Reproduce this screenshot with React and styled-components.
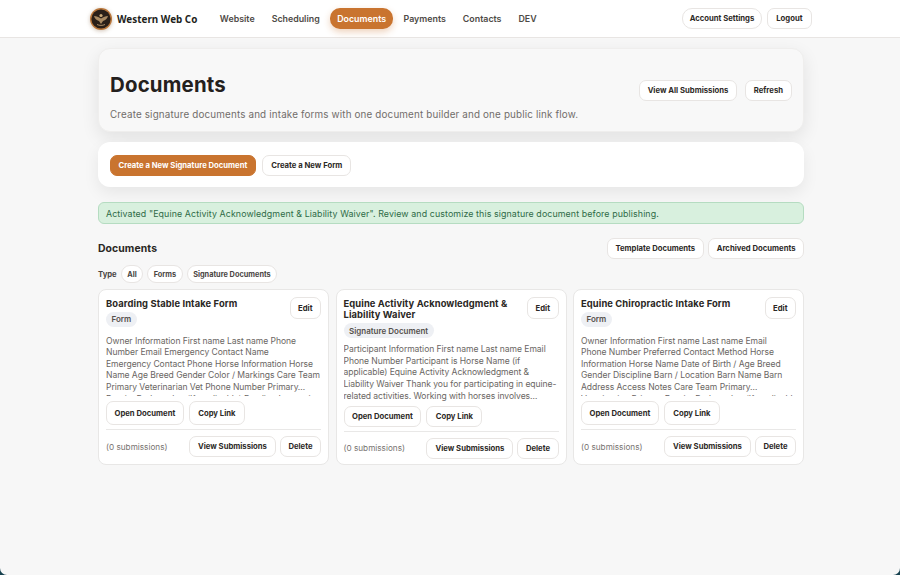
import styled, { createGlobalStyle } from "styled-components";

const GlobalStyle = createGlobalStyle`
  html { background: #17424f; }
  body {
    margin: 0;
    background: #17424f;
    font-family: Inter, "Liberation Sans", sans-serif;
    color: #211e1b;
    -webkit-font-smoothing: antialiased;
  }
  * { box-sizing: border-box; }
`;

const Page = styled.div`
  width: 900px;
  height: 575px;
  overflow: hidden;
  background: #f7f7f7;
  border-radius: 0 0 7px 7px;
`;

const Nav = styled.header`
  height: 38px;
  background: #fff;
  border-bottom: 1px solid #e8e5e3;
  padding: 0 88px 0 90px;
  display: flex;
  align-items: center;
`;

const Brand = styled.div`
  display: flex;
  align-items: center;
  gap: 5px;
  font-family: "Noto Sans", sans-serif;
  font-size: 9.9px;
  font-weight: 700;
  color: #231f1c;
  margin-right: 16px;
`;

const LogoMark = styled.svg`
  width: 22px;
  height: 22px;
  display: block;
  filter: drop-shadow(0 1px 2px rgba(120, 80, 40, 0.35));
`;

const NavLinks = styled.nav`
  display: flex;
  align-items: center;
  gap: 4px;
`;

const NavLink = styled.span`
  padding: 0 ${(p) => (p.$active ? "7px" : "6.5px")};
  height: 21px;
  display: flex;
  align-items: center;
  border-radius: 10px;
  font-size: 8.85px;
  font-weight: 600;
  color: ${(p) => (p.$active ? "#fff" : "#4e4a46")};
  background: ${(p) => (p.$active ? "#c9742f" : "transparent")};
  box-shadow: ${(p) => (p.$active ? "0 3px 7px rgba(201, 116, 47, 0.32)" : "none")};
`;

const NavActions = styled.div`
  margin-left: auto;
  display: flex;
  align-items: center;
  gap: 5px;
`;

const Button = styled.button`
  font-family: inherit;
  font-size: 7.7px;
  font-weight: 700;
  color: #2c2926;
  background: #fff;
  border: 1px solid #e8e5e3;
  border-radius: ${(p) => p.$radius || "7px"};
  height: ${(p) => p.$h || "21px"};
  padding: 0 ${(p) => p.$px || "7.5px"};
  white-space: nowrap;
  display: inline-flex;
  align-items: center;
  justify-content: center;
  flex: none;
`;

const PrimaryButton = styled(Button)`
  background: #c9742f;
  border-color: #c9742f;
  color: #fff;
`;

const Main = styled.main`
  width: 706px;
  margin: 10px 0 0 98px;
`;

const Hero = styled.section`
  height: 84px;
  background: #f8f8f8;
  border: 1px solid #efeeed;
  border-radius: 12px;
  box-shadow: 0 6px 18px rgba(0, 0, 0, 0.09);
  padding: 0 11px;
  display: flex;
  justify-content: space-between;
  align-items: flex-start;
`;

const HeroText = styled.div`
  padding-top: 23px;
`;

const Title = styled.h1`
  margin: 0;
  font-size: 20.4px;
  line-height: 26px;
  font-weight: 700;
  letter-spacing: 0.2px;
  color: #24201d;
`;

const Subtitle = styled.p`
  margin: 10px 0 0;
  font-size: 9.85px;
  line-height: 13px;
  letter-spacing: 0.15px;
  color: #716d6a;
`;

const HeroActions = styled.div`
  display: flex;
  gap: 8px;
  padding-top: 31px;
`;

const ActionCard = styled.section`
  height: 45px;
  margin-top: 10px;
  background: #fff;
  border-radius: 12px;
  box-shadow: 0 6px 16px rgba(0, 0, 0, 0.07);
  padding: 1px 12px 0;
  display: flex;
  align-items: center;
  gap: 6.5px;
`;

const Alert = styled.div`
  height: 22px;
  margin-top: 15px;
  background: #d8f0de;
  border: 1px solid #b5dcc1;
  border-radius: 6px;
  padding: 0 7px;
  display: flex;
  align-items: center;
  font-size: 8.85px;
  letter-spacing: 0.1px;
  color: #2f6b47;
`;

const SectionHead = styled.div`
  margin-top: 14px;
  height: 21px;
  display: flex;
  align-items: center;
  justify-content: space-between;
`;

const SectionTitle = styled.h2`
  margin: 0;
  font-size: 10.4px;
  font-weight: 700;
  letter-spacing: 0.1px;
  color: #2a2724;
`;

const ButtonGroup = styled.div`
  display: flex;
  gap: 4px;
`;

const FilterRow = styled.div`
  margin-top: 6px;
  display: flex;
  align-items: center;
  gap: 4px;
  font-size: 7.7px;
  font-weight: 700;
  color: #4a4643;
`;

const Chip = styled.span`
  height: 18px;
  padding: 0 5.5px;
  background: #fff;
  border: 1px solid #e8e5e3;
  border-radius: 9px;
  font-size: 7.35px;
  display: flex;
  align-items: center;
`;

const CardGrid = styled.div`
  margin-top: 6px;
  display: grid;
  grid-template-columns: 231px 231px 231px;
  column-gap: 6.5px;
`;

const Card = styled.article`
  height: 176px;
  background: #fff;
  border: 1px solid #e8e7e6;
  border-radius: 8px;
  padding: 7px;
  display: flex;
  flex-direction: column;
`;

const CardHead = styled.div`
  display: flex;
  justify-content: space-between;
  align-items: flex-start;
  gap: 8px;
`;

const CardTitle = styled.h3`
  margin: 0;
  padding-top: 0.5px;
  font-size: 9.4px;
  line-height: 11.5px;
  font-weight: 700;
  letter-spacing: 0.1px;
  color: #2a2724;
`;

const Badge = styled.span`
  display: flex;
  width: fit-content;
  align-items: center;
  height: 15px;
  margin-top: 2.5px;
  padding: 0 5.5px;
  background: #eef0f4;
  border-radius: 8px;
  font-size: 8px;
  font-weight: 600;
  color: #55504c;
`;

const Preview = styled.div`
  flex: none;
  margin-top: ${(p) => (p.$tall ? "6px" : "9px")};
  height: ${(p) => (p.$tall ? "58.5px" : "60px")};
  overflow: hidden;
  font-size: 8.55px;
  line-height: 11.65px;
  letter-spacing: -0.05px;
  color: #6a6663;
`;

const PreviewLine = styled.span`
  display: block;
  white-space: nowrap;
`;

const CardButtons = styled.div`
  margin-top: ${(p) => (p.$tall ? "3px" : "5.5px")};
  display: flex;
  gap: 5px;
`;

const CardFoot = styled.div`
  margin-top: 4px;
  border-top: 1px solid #e9e8e7;
  padding-top: 6px;
  display: flex;
  align-items: center;
  gap: 4px;
`;

const Count = styled.span`
  margin-right: auto;
  font-size: 8.2px;
  color: #77726f;
`;

const Logo = () => (
  <LogoMark viewBox="0 0 22 22">
    <circle cx="11" cy="11" r="11" fill="#b9763a" />
    <circle cx="11" cy="11" r="9.6" fill="#2a1f18" />
    <path d="M4 8c2.5.2 4.5 1 7 2.6C13.500 9 15.500 8.200 18 8c-.6 2.600-2.600 4.400-5 5l-2 3-2-3c-2.400-.6-4.400-2.400-5-5z" fill="#a98a63" />
    <circle cx="11" cy="7.500" r="1.600" fill="#c9a877" />
    <path d="M7 16.500c2.500 1.200 5.500 1.200 8 0" stroke="#a98a63" strokeWidth="1" fill="none" />
  </LogoMark>
);

const cards = [
  {
    title: "Boarding Stable Intake Form",
    type: "Form",
    lines: [
      "Owner Information First name Last name Phone",
      "Number Email Emergency Contact Name",
      "Emergency Contact Phone Horse Information Horse",
      "Name Age Breed Gender Color / Markings Care Team",
      "Primary Veterinarian Vet Phone Number Primary…",
      "Dentist Bodyworker (If applicable) Feeding Instructions",
    ],
  },
  {
    title: "Equine Activity Acknowledgment & Liability Waiver",
    type: "Signature Document",
    tall: true,
    lines: [
      "Participant Information First name Last name Email",
      "Phone Number Participant is Horse Name (if",
      "applicable) Equine Activity Acknowledgment &",
      "Liability Waiver Thank you for participating in equine-",
      "related activities. Working with horses involves…",
    ],
  },
  {
    title: "Equine Chiropractic Intake Form",
    type: "Form",
    lines: [
      "Owner Information First name Last name Email",
      "Phone Number Preferred Contact Method Horse",
      "Information Horse Name Date of Birth / Age Breed",
      "Gender Discipline Barn / Location Barn Name Barn",
      "Address Access Notes Care Team Primary…",
      "Veterinarian Primary Dentist Bodyworker (If applicable)",
    ],
  },
];

export default function App() {
  return (
    <>
      <GlobalStyle />
      <Page>
        <Nav>
          <Brand>
            <Logo />
            Western Web Co
          </Brand>
          <NavLinks>
            <NavLink>Website</NavLink>
            <NavLink>Scheduling</NavLink>
            <NavLink $active>Documents</NavLink>
            <NavLink>Payments</NavLink>
            <NavLink>Contacts</NavLink>
            <NavLink>DEV</NavLink>
          </NavLinks>
          <NavActions>
            <Button $radius="10px" $px="6.5px">Account Settings</Button>
            <Button $px="8.5px">Logout</Button>
          </NavActions>
        </Nav>
        <Main>
          <Hero>
            <HeroText>
              <Title>Documents</Title>
              <Subtitle>Create signature documents and intake forms with one document builder and one public link flow.</Subtitle>
            </HeroText>
            <HeroActions>
              <Button>View All Submissions</Button>
              <Button $px="8px">Refresh</Button>
            </HeroActions>
          </Hero>
          <ActionCard>
            <PrimaryButton>Create a New Signature Document</PrimaryButton>
            <Button $px="8px">Create a New Form</Button>
          </ActionCard>
          <Alert>Activated "Equine Activity Acknowledgment &amp; Liability Waiver". Review and customize this signature document before publishing.</Alert>
          <SectionHead>
            <SectionTitle>Documents</SectionTitle>
            <ButtonGroup>
              <Button $px="8px">Template Documents</Button>
              <Button>Archived Documents</Button>
            </ButtonGroup>
          </SectionHead>
          <FilterRow>
            Type
            <Chip>All</Chip>
            <Chip>Forms</Chip>
            <Chip>Signature Documents</Chip>
          </FilterRow>
          <CardGrid>
            {cards.map((card) => (
              <Card key={card.title}>
                <CardHead>
                  <div>
                    <CardTitle>{card.title}</CardTitle>
                    <Badge>{card.type}</Badge>
                  </div>
                  <Button $h="22px">Edit</Button>
                </CardHead>
                <Preview $tall={card.tall}>
                  {card.lines.map((line) => (
                    <PreviewLine key={line}>{line}</PreviewLine>
                  ))}
                </Preview>
                <CardButtons $tall={card.tall}>
                  <Button $h={card.tall ? "21px" : "24px"}>Open Document</Button>
                  <Button $h={card.tall ? "21px" : "24px"} $px="8.5px">Copy Link</Button>
                </CardButtons>
                <CardFoot>
                  <Count>(0 submissions)</Count>
                  <Button $px="8px">View Submissions</Button>
                  <Button>Delete</Button>
                </CardFoot>
              </Card>
            ))}
          </CardGrid>
        </Main>
      </Page>
    </>
  );
}
